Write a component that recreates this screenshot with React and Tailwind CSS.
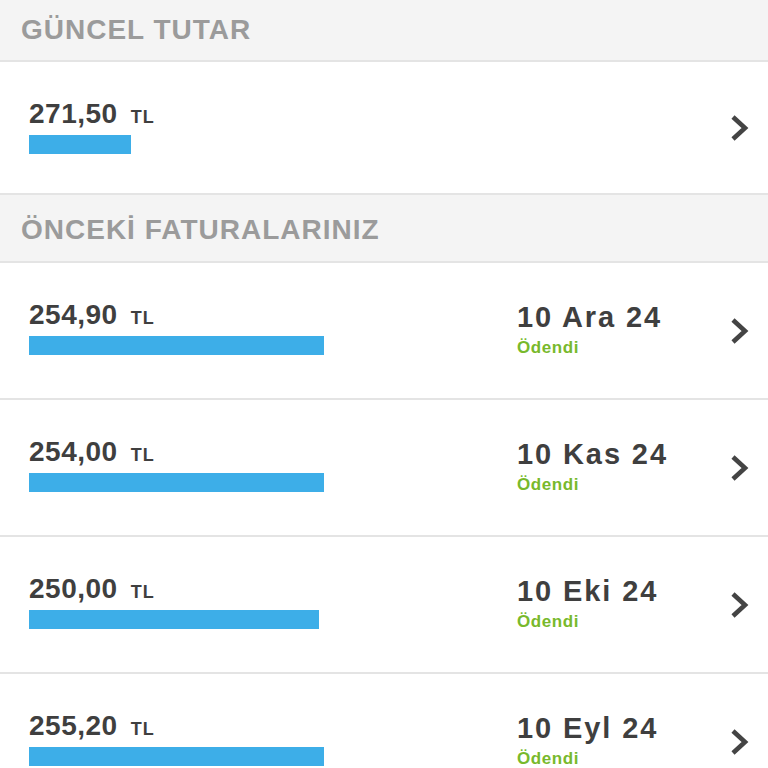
const bills = [
  { amount: '254,90', width: 295, date: '10 Ara 24' },
  { amount: '254,00', width: 295, date: '10 Kas 24' },
  { amount: '250,00', width: 290, date: '10 Eki 24' },
  { amount: '255,20', width: 295, date: '10 Eyl 24' },
]

function Chevron() {
  return (
    <svg width="22" height="30" viewBox="0 0 22 30" className="shrink-0">
      <polyline points="5,4 17,15 5,26" fill="none" stroke="#444444" strokeWidth="4.6" strokeLinejoin="miter" />
    </svg>
  )
}

function Amount({ value, width }) {
  return (
    <div className="flex-1 pt-[38px] pl-[29px]">
      <div className="flex items-baseline text-[#3f3f3f] font-bold">
        <span className="text-[28px] leading-none tracking-[0.5px]">{value}</span>
        <span className="ml-[13px] text-[18px] leading-none tracking-[1px]">TL</span>
      </div>
      <div className="mt-[7px] h-[19px] bg-[#3daee8]" style={{ width }} />
    </div>
  )
}

function SectionHeader({ children, className }) {
  return (
    <div className={`bg-[#f4f4f4] border-b-2 border-[#e4e4e4] pl-[21px] ${className}`}>
      <h2 className="text-[28px] leading-none font-bold text-[#9b9b9b] tracking-[1px]">{children}</h2>
    </div>
  )
}

export default function App() {
  return (
    <div className="w-[768px] h-[768px] overflow-hidden bg-white" style={{ fontFamily: '"Liberation Sans", Arial, sans-serif' }}>
      <SectionHeader className="h-[62px] pt-[16px]">GÜNCEL TUTAR</SectionHeader>

      <div className="flex h-[133px] border-b-2 border-[#e4e4e4] pr-[18px]">
        <Amount value="271,50" width={102} />
        <div className="self-center">
          <Chevron />
        </div>
      </div>

      <SectionHeader className="h-[68px] pt-[21px]">ÖNCEKİ FATURALARINIZ</SectionHeader>

      {bills.map((b) => (
        <div key={b.date} className="flex h-[137px] border-b-2 border-[#e4e4e4] pr-[18px]">
          <Amount value={b.amount} width={b.width} />
          <div className="w-[211px] pt-[40px] font-bold">
            <div className="text-[29px] leading-none text-[#3f3f3f] tracking-[1.9px]">{b.date}</div>
            <div className="mt-[7px] text-[17px] leading-none text-[#78b92c] tracking-[0.6px]">Ödendi</div>
          </div>
          <div className="self-center">
            <Chevron />
          </div>
        </div>
      ))}
    </div>
  )
}
